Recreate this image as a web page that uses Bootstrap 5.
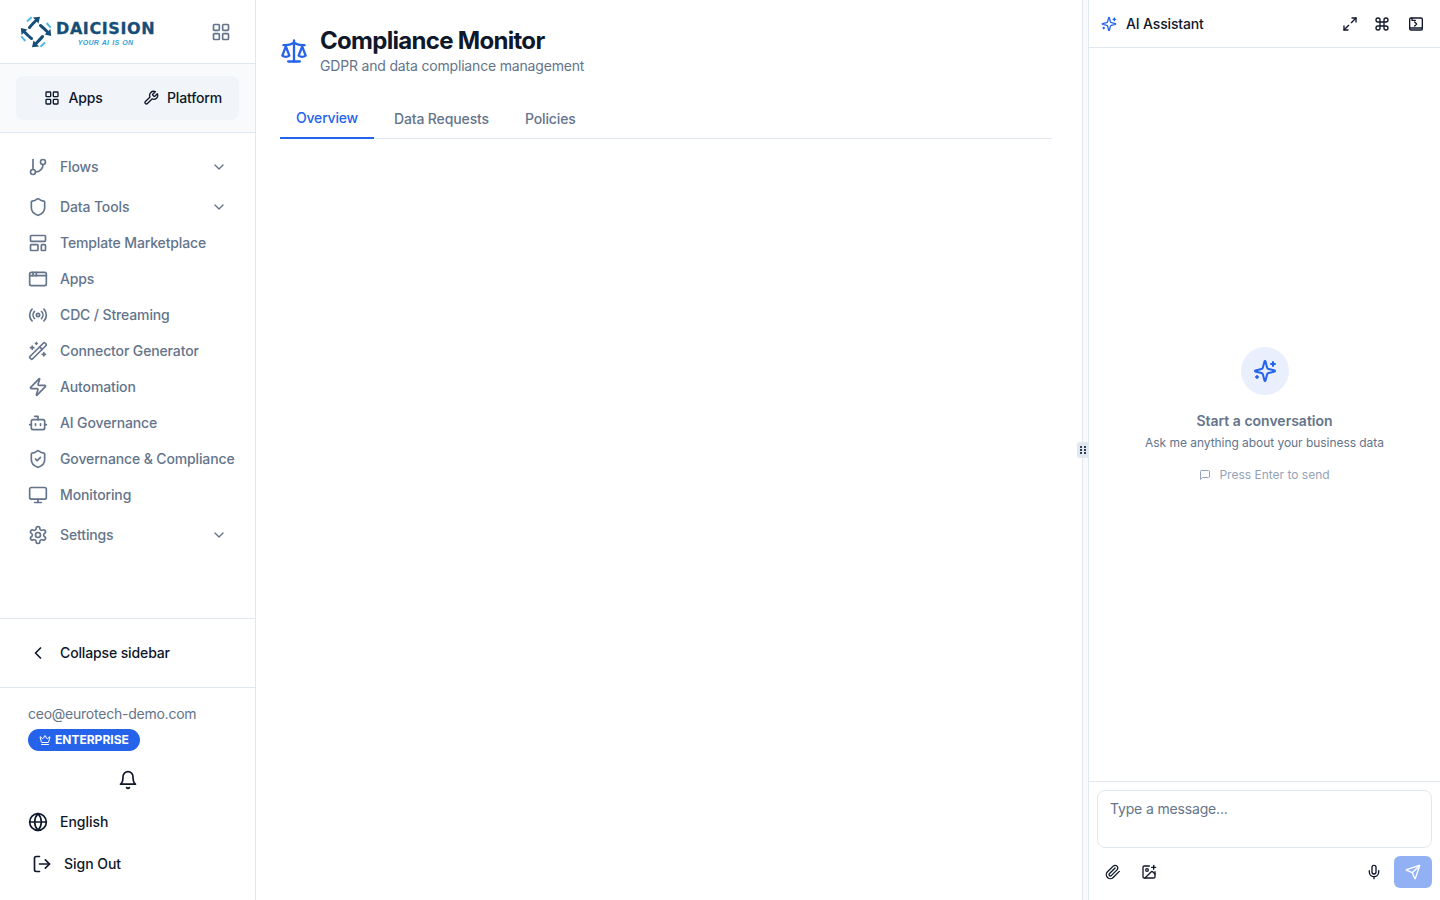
<!DOCTYPE html>
<html lang="en">
<head>
<meta charset="utf-8">
<title>Compliance Monitor</title>
<link href="https://cdn.jsdelivr.net/npm/bootstrap@5.3.0/dist/css/bootstrap.min.css" rel="stylesheet">
<style>
html,body{height:100%;}
body{font-family:Inter,"Liberation Sans",sans-serif;color:#0f172a;background:#fff;overflow:hidden;}
.ico{fill:none;stroke:currentColor;stroke-width:2;stroke-linecap:round;stroke-linejoin:round;flex:none;display:block;}
.shell{height:900px;}
.side{width:256px;flex:none;border-right:1px solid #e2e8f0;}
.brand{height:64px;padding:0 24px 0 20px;border-bottom:1px solid #e2e8f0;}
.brand-txt{line-height:1;margin-top:4px;}
.brand-name{font-family:"DejaVu Sans",sans-serif;font-weight:700;font-size:16px;letter-spacing:.6px;color:#164e78;line-height:17px;-webkit-text-stroke:.3px #164e78;}
.brand-tag{font-family:"Liberation Sans",sans-serif;font-weight:700;font-style:italic;font-size:7px;letter-spacing:.25px;word-spacing:.8px;color:#2f9fd8;line-height:8px;text-align:center;margin-top:2px;}
.grid-ico{color:#64748b;}
.switch-wrap{height:69px;padding:12px 16px;background:#f8fafc;border-bottom:1px solid #e2e8f0;}
.switcher{height:44px;background:#f1f5f9;border-radius:8px;font-size:14px;font-weight:500;line-height:20px;letter-spacing:-.14px;}
.switcher>div{height:44px;}
.sw-a{width:115px;}
.sw-b{width:103px;}
.navlist{padding:16px 12px 0 16px;flex:1 1 auto;}
.nav-line{height:36px;padding:0 12px;gap:12px;font-size:14px;font-weight:500;line-height:20px;letter-spacing:-.13px;color:#64748b;}
.nav-after{margin-bottom:4px;}
.nav-before{margin-top:4px;}
.nav-line .grow-txt{flex:1 1 auto;white-space:nowrap;}
.chev{margin-right:4px;}
.collapse-row{height:70px;border-top:1px solid #e2e8f0;border-bottom:1px solid #e2e8f0;padding:0 28px;gap:12px;font-size:14px;font-weight:500;line-height:20px;letter-spacing:-.13px;}
.foot{padding:0 28px;height:212px;}
.mail{font-size:14px;color:#64748b;line-height:20px;margin-top:16px;letter-spacing:-.24px;}
.plan{display:inline-flex;align-items:center;gap:4px;height:22px;background:#2563eb;color:#fff;border-radius:11px;padding:0 11.5px 0 11px;font-size:12px;font-weight:700;margin-top:5px;line-height:1;}
.foot-row{font-size:14px;font-weight:500;line-height:20px;height:24px;gap:12px;letter-spacing:-.03px;}
.bell-row{margin-top:18px;}
.row-a{margin-top:20px;}
.row-b{margin-top:18px;padding-left:4px;}
.main-col{flex:1 1 auto;min-width:0;padding:26px 30px 0 24px;}
.head-row{gap:12px;}
.scale-ico{color:#2563eb;}
.page-title{font-size:24px;font-weight:700;line-height:30px;letter-spacing:-.7px;margin:0;}
.page-sub{font-size:14px;color:#64748b;line-height:20px;margin:0;letter-spacing:-.18px;}
.tabbar{border-bottom:1px solid #e2e8f0;margin-top:22px;height:41px;font-size:14px;font-weight:500;line-height:20px;letter-spacing:-.13px;color:#64748b;}
.tabby{height:41px;padding:1px 16px 0;display:flex;align-items:center;margin-bottom:-1px;}
.tabby+.tabby{padding:1px 20px 0 16px;}
.tabby.on{color:#2563eb;border-bottom:2px solid #2563eb;padding:1px 16px 0;margin-right:4px;letter-spacing:-.2px;}
.handle-zone{width:6px;flex:none;background:#f8fafc;position:relative;border-left:1px solid #e2e8f0;}
.handle{position:absolute;left:-6px;top:442px;width:12px;height:16px;background:#e2e8f0;border-radius:3px;display:flex;align-items:center;justify-content:center;color:#334155;}
.ai{width:352px;flex:none;border-left:1px solid #e2e8f0;}
.ai-head{height:48px;border-bottom:1px solid #e2e8f0;padding:0 16px 0 12px;}
.ai-spark{color:#2563eb;}
.ai-title{font-size:14px;font-weight:500;line-height:20px;margin-left:9px;letter-spacing:-.15px;}
.tool-gap-a{margin-right:16px;}
.tool-gap-b{margin-right:18px;}
.ai-body{flex:1 1 auto;padding-top:1px;}
.halo{width:48px;height:48px;border-radius:50%;background:#e9effd;color:#2563eb;}
.hello{font-size:14px;font-weight:600;color:#64748b;line-height:20px;margin-top:16px;}
.ask{font-size:12px;color:#64748b;line-height:16px;margin-top:4px;letter-spacing:-.05px;}
.hint{font-size:12px;color:#94a3b8;line-height:16px;margin-top:16px;gap:8px;}
.ai-foot{height:119px;border-top:1px solid #e2e8f0;padding:8px;}
.msgbox{height:58px;border:1px solid #e2e8f0;border-radius:8px;padding:8px 12px;font-size:14px;line-height:20px;color:#64748b;letter-spacing:-.16px;}
.tools-line{margin-top:8px;height:32px;padding:0 8px;}
.tool-img{margin-left:20px;}
.sendy{width:38px;height:32px;background:#92b1f5;border-radius:6px;color:#fff;margin-right:-8px;margin-left:12px;}
.logo-svg{flex:none;display:block;}
</style>
</head>
<body>
<svg width="0" height="0" class="position-absolute" aria-hidden="true">
<defs>
<symbol id="i-grid" viewBox="0 0 24 24"><rect x="3" y="3" width="7" height="7" rx="1"/><rect x="14" y="3" width="7" height="7" rx="1"/><rect x="14" y="14" width="7" height="7" rx="1"/><rect x="3" y="14" width="7" height="7" rx="1"/></symbol>
<symbol id="i-wrench" viewBox="0 0 24 24"><path d="M14.7 6.3a1 1 0 0 0 0 1.4l1.6 1.6a1 1 0 0 0 1.4 0l3.77-3.77a6 6 0 0 1-7.94 7.94l-6.91 6.91a2.12 2.12 0 0 1-3-3l6.91-6.91a6 6 0 0 1 7.94-7.94l-3.76 3.76z"/></symbol>
<symbol id="i-branch" viewBox="0 0 24 24"><line x1="6" y1="3" x2="6" y2="15"/><circle cx="18" cy="6" r="3"/><circle cx="6" cy="18" r="3"/><path d="M18 9a9 9 0 0 1-9 9"/></symbol>
<symbol id="i-shield" viewBox="0 0 24 24"><path d="M20 13c0 5-3.5 7.5-7.66 8.95a1 1 0 0 1-.67-.01C7.5 20.5 4 18 4 13V6a1 1 0 0 1 1-1c2 0 4.5-1.2 6.24-2.72a1.17 1.17 0 0 1 1.52 0C14.51 3.81 17 5 19 5a1 1 0 0 1 1 1z"/></symbol>
<symbol id="i-shieldc" viewBox="0 0 24 24"><path d="M20 13c0 5-3.5 7.5-7.66 8.95a1 1 0 0 1-.67-.01C7.5 20.5 4 18 4 13V6a1 1 0 0 1 1-1c2 0 4.5-1.2 6.24-2.72a1.17 1.17 0 0 1 1.52 0C14.51 3.81 17 5 19 5a1 1 0 0 1 1 1z"/><path d="m9 12 2 2 4-4"/></symbol>
<symbol id="i-tmpl" viewBox="0 0 24 24"><rect x="3" y="3" width="18" height="7" rx="1"/><rect x="3" y="14" width="9" height="7" rx="1"/><rect x="16" y="14" width="5" height="7" rx="1"/></symbol>
<symbol id="i-window" viewBox="0 0 24 24"><rect x="2" y="4" width="20" height="16" rx="2"/><path d="M10 4v4"/><path d="M2 8h20"/><path d="M6 4v4"/></symbol>
<symbol id="i-radio" viewBox="0 0 24 24"><path d="M4.9 19.1C1 15.2 1 8.8 4.9 4.9"/><path d="M7.8 16.2c-2.3-2.3-2.3-6.1 0-8.5"/><circle cx="12" cy="12" r="2"/><path d="M16.2 7.8c2.3 2.3 2.3 6.1 0 8.5"/><path d="M19.1 4.9C23 8.8 23 15.1 19.1 19"/></symbol>
<symbol id="i-wand" viewBox="0 0 24 24"><path d="m21.64 3.64-1.28-1.28a1.21 1.21 0 0 0-1.72 0L2.36 18.64a1.21 1.21 0 0 0 0 1.72l1.28 1.28a1.2 1.2 0 0 0 1.72 0L21.64 5.36a1.2 1.2 0 0 0 0-1.72"/><path d="m14 7 3 3"/><path d="M5 6v4"/><path d="M19 14v4"/><path d="M10 2v2"/><path d="M7 8H3"/><path d="M21 16h-4"/><path d="M11 3H9"/></symbol>
<symbol id="i-zap" viewBox="0 0 24 24"><path d="M4 14a1 1 0 0 1-.78-1.63l9.9-10.2a.5.5 0 0 1 .86.46l-1.92 6.02A1 1 0 0 0 13 10h7a1 1 0 0 1 .78 1.63l-9.9 10.2a.5.5 0 0 1-.86-.46l1.92-6.02A1 1 0 0 0 11 14z"/></symbol>
<symbol id="i-bot" viewBox="0 0 24 24"><path d="M12 8V4H8"/><rect x="4" y="8" width="16" height="12" rx="2"/><path d="M2 14h2"/><path d="M20 14h2"/><path d="M15 13v2"/><path d="M9 13v2"/></symbol>
<symbol id="i-monitor" viewBox="0 0 24 24"><rect x="2" y="3" width="20" height="14" rx="2"/><line x1="8" y1="21" x2="16" y2="21"/><line x1="12" y1="17" x2="12" y2="21"/></symbol>
<symbol id="i-gear" viewBox="0 0 24 24"><path d="M12.22 2h-.44a2 2 0 0 0-2 2v.18a2 2 0 0 1-1 1.73l-.43.25a2 2 0 0 1-2 0l-.15-.08a2 2 0 0 0-2.73.73l-.22.38a2 2 0 0 0 .73 2.73l.15.1a2 2 0 0 1 1 1.72v.51a2 2 0 0 1-1 1.74l-.15.09a2 2 0 0 0-.73 2.73l.22.38a2 2 0 0 0 2.73.73l.15-.08a2 2 0 0 1 2 0l.43.25a2 2 0 0 1 1 1.73V20a2 2 0 0 0 2 2h.44a2 2 0 0 0 2-2v-.18a2 2 0 0 1 1-1.73l.43-.25a2 2 0 0 1 2 0l.15.08a2 2 0 0 0 2.73-.73l.22-.39a2 2 0 0 0-.73-2.73l-.15-.08a2 2 0 0 1-1-1.74v-.5a2 2 0 0 1 1-1.74l.15-.09a2 2 0 0 0 .73-2.73l-.22-.38a2 2 0 0 0-2.73-.73l-.15.08a2 2 0 0 1-2 0l-.43-.25a2 2 0 0 1-1-1.73V4a2 2 0 0 0-2-2z"/><circle cx="12" cy="12" r="3"/></symbol>
<symbol id="i-down" viewBox="0 0 24 24"><path d="m6 9 6 6 6-6"/></symbol>
<symbol id="i-left" viewBox="0 0 24 24"><path d="m15 18-6-6 6-6"/></symbol>
<symbol id="i-crown" viewBox="0 0 24 24"><path d="M11.562 3.266a.5.5 0 0 1 .876 0L15.39 8.87a1 1 0 0 0 1.516.294L21.183 5.5a.5.5 0 0 1 .798.519l-2.834 10.246a1 1 0 0 1-.956.734H5.81a1 1 0 0 1-.957-.734L2.02 6.02a.5.5 0 0 1 .798-.519l4.276 3.664a1 1 0 0 0 1.516-.294z"/><path d="M5 21h14"/></symbol>
<symbol id="i-bell" viewBox="0 0 24 24"><path d="M6 8a6 6 0 0 1 12 0c0 7 3 9 3 9H3s3-2 3-9"/><path d="M10.3 21a1.94 1.94 0 0 0 3.4 0"/></symbol>
<symbol id="i-globe" viewBox="0 0 24 24"><circle cx="12" cy="12" r="10"/><path d="M12 2a14.5 14.5 0 0 0 0 20 14.5 14.5 0 0 0 0-20"/><path d="M2 12h20"/></symbol>
<symbol id="i-logout" viewBox="0 0 24 24"><path d="M9 21H5a2 2 0 0 1-2-2V5a2 2 0 0 1 2-2h4"/><polyline points="16 17 21 12 16 7"/><line x1="21" y1="12" x2="9" y2="12"/></symbol>
<symbol id="i-scale" viewBox="0 0 24 24"><path d="m16 16 3-8 3 8c-.87.65-1.92 1-3 1s-2.13-.35-3-1Z"/><path d="m2 16 3-8 3 8c-.87.65-1.92 1-3 1s-2.13-.35-3-1Z"/><path d="M7 21h10"/><path d="M12 3v18"/><path d="M3 7h2c2 0 5-1 7-2 2 1 5 2 7 2h2"/></symbol>
<symbol id="i-spark" viewBox="0 0 24 24"><path d="M9.937 15.5A2 2 0 0 0 8.5 14.063l-6.135-1.582a.5.5 0 0 1 0-.962L8.5 9.936A2 2 0 0 0 9.937 8.5l1.582-6.135a.5.5 0 0 1 .963 0L14.063 8.5A2 2 0 0 0 15.5 9.937l6.135 1.581a.5.5 0 0 1 0 .964L15.5 14.063a2 2 0 0 0-1.437 1.437l-1.582 6.135a.5.5 0 0 1-.963 0z"/><path d="M20 3v4"/><path d="M22 5h-4"/><path d="M4 17v2"/><path d="M5 18H3"/></symbol>
<symbol id="i-expand" viewBox="0 0 24 24"><path d="M15 3h6v6"/><path d="m21 3-7 7"/><path d="m3 21 7-7"/><path d="M9 21H3v-6"/></symbol>
<symbol id="i-cmd" viewBox="0 0 24 24"><path d="M15 6v12a3 3 0 1 0 3-3H6a3 3 0 1 0 3 3V6a3 3 0 1 0-3 3h12a3 3 0 1 0-3-3"/></symbol>
<symbol id="i-book" viewBox="0 0 24 24"><rect x="2.5" y="3" width="19" height="18" rx="2"/><path d="M2.5 18h19"/><path d="M6 3v3.5h5"/><path d="m10 9 3 3-3 3"/></symbol>
<symbol id="i-msg" viewBox="0 0 24 24"><path d="M21 15a2 2 0 0 1-2 2H7l-4 4V5a2 2 0 0 1 2-2h14a2 2 0 0 1 2 2z"/></symbol>
<symbol id="i-clip" viewBox="0 0 24 24"><path d="m21.44 11.05-9.19 9.19a6 6 0 0 1-8.49-8.49l8.57-8.57A4 4 0 1 1 18 8.84l-8.59 8.57a2 2 0 0 1-2.83-2.83l8.49-8.48"/></symbol>
<symbol id="i-imgp" viewBox="0 0 24 24"><path d="M16 5h6"/><path d="M19 2v6"/><path d="M21 11.5V19a2 2 0 0 1-2 2H5a2 2 0 0 1-2-2V5a2 2 0 0 1 2-2h7.5"/><path d="m21 15-3.086-3.086a2 2 0 0 0-2.828 0L6 21"/><circle cx="9" cy="9" r="2"/></symbol>
<symbol id="i-mic" viewBox="0 0 24 24"><path d="M12 2a3 3 0 0 0-3 3v7a3 3 0 0 0 6 0V5a3 3 0 0 0-3-3Z"/><path d="M19 10v2a7 7 0 0 1-14 0v-2"/><line x1="12" y1="19" x2="12" y2="22"/></symbol>
<symbol id="i-send" viewBox="0 0 24 24"><path d="M14.536 21.686a.5.5 0 0 0 .937-.024l6.5-19a.496.496 0 0 0-.635-.635l-19 6.5a.5.5 0 0 0-.024.937l7.93 3.18a2 2 0 0 1 1.112 1.11z"/><path d="m21.854 2.147-10.94 10.939"/></symbol>
</defs>
</svg>

<div class="shell d-flex">
  <aside class="side d-flex flex-column">
    <div class="brand d-flex align-items-center justify-content-between">
      <div class="d-flex align-items-center gap-1">
        <svg width="32" height="32" viewBox="0 0 32 32" class="logo-svg" aria-hidden="true">
          <g id="logo-arm">
            <path d="M9.5 11.5C11 9.5 13 7.5 15.5 5" stroke="#164e78" stroke-width="3" fill="none" stroke-linecap="round"/>
            <polygon points="20,0.8 13,1.6 18.5,7.4" fill="#164e78"/>
            <path d="M7 5.4 11.6 1.2" stroke="#4fb8ea" stroke-width="2" fill="none"/>
          </g>
          <use href="#logo-arm" transform="rotate(90 16 16)"/>
          <use href="#logo-arm" transform="rotate(180 16 16)"/>
          <use href="#logo-arm" transform="rotate(270 16 16)"/>
        </svg>
        <div class="brand-txt">
          <div class="brand-name">DAICISION</div>
          <div class="brand-tag">YOUR AI IS ON</div>
        </div>
      </div>
      <svg class="ico grid-ico" width="20" height="20"><use href="#i-grid"/></svg>
    </div>
    <div class="switch-wrap">
      <div class="switcher d-flex">
        <div class="sw-a d-flex align-items-center justify-content-center gap-2"><svg class="ico" width="16" height="16"><use href="#i-grid"/></svg>Apps</div>
        <div class="sw-b d-flex align-items-center justify-content-center gap-2"><svg class="ico" width="16" height="16"><use href="#i-wrench"/></svg>Platform</div>
      </div>
    </div>
    <nav class="navlist">
      <div class="nav-line nav-after d-flex align-items-center"><svg class="ico" width="20" height="20"><use href="#i-branch"/></svg><span class="grow-txt">Flows</span><svg class="ico chev" width="16" height="16"><use href="#i-down"/></svg></div>
      <div class="nav-line d-flex align-items-center"><svg class="ico" width="20" height="20"><use href="#i-shield"/></svg><span class="grow-txt">Data Tools</span><svg class="ico chev" width="16" height="16"><use href="#i-down"/></svg></div>
      <div class="nav-line d-flex align-items-center"><svg class="ico" width="20" height="20"><use href="#i-tmpl"/></svg><span class="grow-txt">Template Marketplace</span></div>
      <div class="nav-line d-flex align-items-center"><svg class="ico" width="20" height="20"><use href="#i-window"/></svg><span class="grow-txt">Apps</span></div>
      <div class="nav-line d-flex align-items-center"><svg class="ico" width="20" height="20"><use href="#i-radio"/></svg><span class="grow-txt">CDC / Streaming</span></div>
      <div class="nav-line d-flex align-items-center"><svg class="ico" width="20" height="20"><use href="#i-wand"/></svg><span class="grow-txt">Connector Generator</span></div>
      <div class="nav-line d-flex align-items-center"><svg class="ico" width="20" height="20"><use href="#i-zap"/></svg><span class="grow-txt">Automation</span></div>
      <div class="nav-line d-flex align-items-center"><svg class="ico" width="20" height="20"><use href="#i-bot"/></svg><span class="grow-txt">AI Governance</span></div>
      <div class="nav-line d-flex align-items-center"><svg class="ico" width="20" height="20"><use href="#i-shieldc"/></svg><span class="grow-txt">Governance &amp; Compliance</span></div>
      <div class="nav-line d-flex align-items-center"><svg class="ico" width="20" height="20"><use href="#i-monitor"/></svg><span class="grow-txt">Monitoring</span></div>
      <div class="nav-line nav-before d-flex align-items-center"><svg class="ico" width="20" height="20"><use href="#i-gear"/></svg><span class="grow-txt">Settings</span><svg class="ico chev" width="16" height="16"><use href="#i-down"/></svg></div>
    </nav>
    <div class="collapse-row d-flex align-items-center"><svg class="ico" width="20" height="20"><use href="#i-left"/></svg>Collapse sidebar</div>
    <div class="foot">
      <div class="mail">ceo@eurotech-demo.com</div>
      <div class="plan"><svg class="ico" width="12" height="12"><use href="#i-crown"/></svg>ENTERPRISE</div>
      <div class="bell-row d-flex justify-content-center"><svg class="ico" width="20" height="20"><use href="#i-bell"/></svg></div>
      <div class="foot-row row-a d-flex align-items-center"><svg class="ico" width="20" height="20"><use href="#i-globe"/></svg>English</div>
      <div class="foot-row row-b d-flex align-items-center"><svg class="ico" width="20" height="20"><use href="#i-logout"/></svg>Sign Out</div>
    </div>
  </aside>

  <main class="main-col">
    <div class="head-row d-flex align-items-center">
      <svg class="ico scale-ico" width="28" height="28"><use href="#i-scale"/></svg>
      <div>
        <h1 class="page-title">Compliance Monitor</h1>
        <p class="page-sub">GDPR and data compliance management</p>
      </div>
    </div>
    <div class="tabbar d-flex">
      <div class="tabby on">Overview</div>
      <div class="tabby">Data Requests</div>
      <div class="tabby">Policies</div>
    </div>
  </main>

  <div class="handle-zone">
    <div class="handle"><svg width="6" height="8" viewBox="0 0 6 8" fill="currentColor" aria-hidden="true"><rect x="0" y="0" width="2" height="2"/><rect x="4" y="0" width="2" height="2"/><rect x="0" y="3" width="2" height="2"/><rect x="4" y="3" width="2" height="2"/><rect x="0" y="6" width="2" height="2"/><rect x="4" y="6" width="2" height="2"/></svg></div>
  </div>

  <section class="ai d-flex flex-column">
    <div class="ai-head d-flex align-items-center">
      <svg class="ico ai-spark" width="16" height="16"><use href="#i-spark"/></svg>
      <span class="ai-title flex-grow-1">AI Assistant</span>
      <div class="d-flex">
        <svg class="ico tool-gap-a" width="16" height="16"><use href="#i-expand"/></svg>
        <svg class="ico tool-gap-b" width="16" height="16"><use href="#i-cmd"/></svg>
        <svg class="ico" width="16" height="16"><use href="#i-book"/></svg>
      </div>
    </div>
    <div class="ai-body d-flex flex-column align-items-center justify-content-center text-center">
      <div class="halo d-flex align-items-center justify-content-center"><svg class="ico" width="24" height="24"><use href="#i-spark"/></svg></div>
      <div class="hello">Start a conversation</div>
      <div class="ask">Ask me anything about your business data</div>
      <div class="hint d-flex align-items-center"><svg class="ico" width="12" height="12"><use href="#i-msg"/></svg>Press Enter to send</div>
    </div>
    <div class="ai-foot">
      <div class="msgbox">Type a message...</div>
      <div class="tools-line d-flex align-items-center">
        <svg class="ico" width="16" height="16"><use href="#i-clip"/></svg>
        <svg class="ico tool-img" width="16" height="16"><use href="#i-imgp"/></svg>
        <svg class="ico ms-auto" width="16" height="16"><use href="#i-mic"/></svg>
        <div class="sendy d-flex align-items-center justify-content-center"><svg class="ico" width="16" height="16"><use href="#i-send"/></svg></div>
      </div>
    </div>
  </section>
</div>
<script src="https://cdn.jsdelivr.net/npm/bootstrap@5.3.0/dist/js/bootstrap.bundle.min.js"></script>
</body>
</html>
